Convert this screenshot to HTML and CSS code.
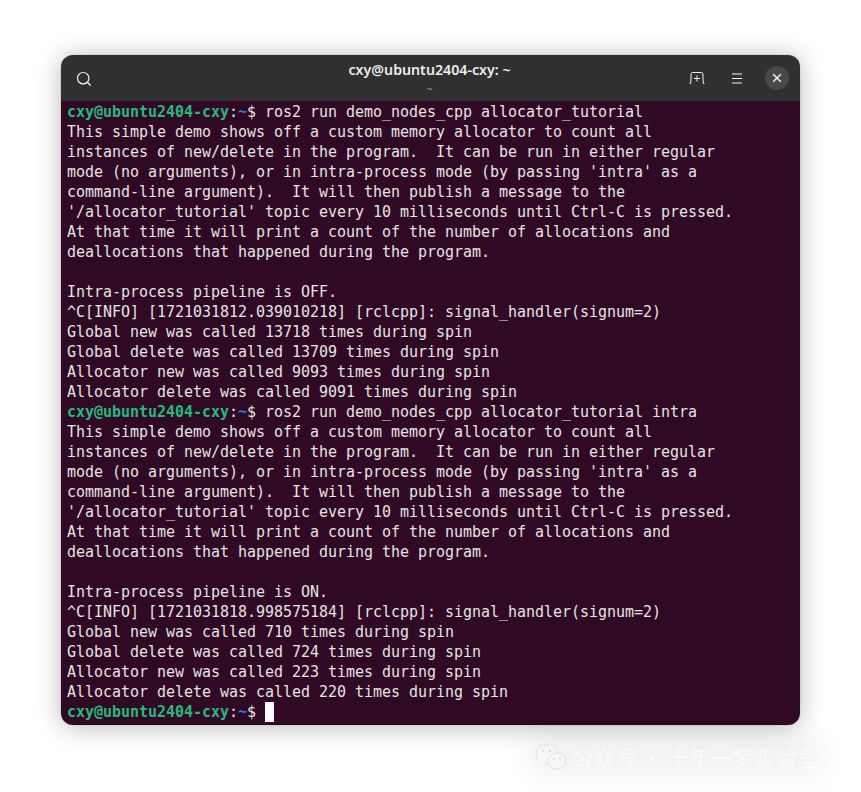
FILE: index.html
```html
<!DOCTYPE html>
<html lang="en">
<head>
<meta charset="utf-8">
<title>cxy@ubuntu2404-cxy: ~</title>
<link rel="stylesheet" href="styles.css">
</head>
<body>
<main class="window">
  <header class="titlebar">
    <button class="icon-btn search" aria-label="Search">
      <svg width="16" height="16" viewBox="0 0 16 16" fill="none" stroke="#f2f2f2" stroke-width="1.2"><circle cx="7.2" cy="7.2" r="5.7"/><path d="M11.3 11.3 14.6 14.6" stroke-width="1.4"/></svg>
    </button>
    <div class="title">
      <div class="title-main">cxy@ubuntu2404-cxy: ~</div>
      <div class="title-sub">~</div>
    </div>
    <div class="actions">
      <button class="icon-btn" aria-label="New tab">
        <svg width="16" height="12" viewBox="0 0 16 12" fill="none" stroke="#f2f2f2" stroke-width="1"><path d="M.5 11.5H1.7L2.2 1.8Q2.3 .5 3.5 .5H12.5Q13.7 .5 13.8 1.8L14.3 11.5H15.5"/><path d="M8 3.5V9.5M5 6.5H11"/></svg>
      </button>
      <button class="icon-btn menu" aria-label="Menu">
        <svg width="12" height="11" viewBox="0 0 12 11" fill="none" stroke="#f2f2f2" stroke-width="1"><path d="M1 1H11M1 5.5H11M1 10H11"/></svg>
      </button>
      <button class="close-btn" aria-label="Close">
        <svg width="10" height="10" viewBox="0 0 10 10" fill="none" stroke="#f5f5f5" stroke-width="1.5"><path d="M1.2 1.2 8.8 8.8M8.8 1.2 1.2 8.8"/></svg>
      </button>
    </div>
  </header>
  <pre class="terminal"><span class="user">cxy@ubuntu2404-cxy</span>:<span class="path">~</span>$ ros2 run demo_nodes_cpp allocator_tutorial
This simple demo shows off a custom memory allocator to count all
instances of new/delete in the program.  It can be run in either regular
mode (no arguments), or in intra-process mode (by passing 'intra' as a
command-line argument).  It will then publish a message to the
'/allocator_tutorial' topic every 10 milliseconds until Ctrl-C is pressed.
At that time it will print a count of the number of allocations and
deallocations that happened during the program.

Intra-process pipeline is OFF.
^C[INFO] [1721031812.039010218] [rclcpp]: signal_handler(signum=2)
Global new was called 13718 times during spin
Global delete was called 13709 times during spin
Allocator new was called 9093 times during spin
Allocator delete was called 9091 times during spin
<span class="user">cxy@ubuntu2404-cxy</span>:<span class="path">~</span>$ ros2 run demo_nodes_cpp allocator_tutorial intra
This simple demo shows off a custom memory allocator to count all
instances of new/delete in the program.  It can be run in either regular
mode (no arguments), or in intra-process mode (by passing 'intra' as a
command-line argument).  It will then publish a message to the
'/allocator_tutorial' topic every 10 milliseconds until Ctrl-C is pressed.
At that time it will print a count of the number of allocations and
deallocations that happened during the program.

Intra-process pipeline is ON.
^C[INFO] [1721031818.998575184] [rclcpp]: signal_handler(signum=2)
Global new was called 710 times during spin
Global delete was called 724 times during spin
Allocator new was called 223 times during spin
Allocator delete was called 220 times during spin
<span class="user">cxy@ubuntu2404-cxy</span>:<span class="path">~</span>$ <span class="cursor"> </span></pre>
</main>
<div class="watermark">
  <svg class="wechat" width="32" height="26" viewBox="0 0 32 26"><ellipse cx="12" cy="10" rx="11" ry="9.5" fill="#f7f7f7" stroke="#e4e4e4"/><path d="M5 16 4 21 10 18Z" fill="#f7f7f7"/><ellipse cx="22" cy="17" rx="9" ry="8" fill="#f7f7f7" stroke="#e0e0e0"/><circle cx="8" cy="7" r="1.2" fill="#ddd"/><circle cx="15" cy="7" r="1.2" fill="#ddd"/><circle cx="19" cy="15" r="1" fill="#ddd"/><circle cx="25" cy="15" r="1" fill="#ddd"/></svg>
  <span class="mark-text">公众号 · 十年一梦实验室</span>
</div>
</body>
</html>
```
FILE: styles.css
```css
* { box-sizing: border-box; }
html { background: #fff; }
html, body { margin: 0; height: 792px; overflow: hidden; }
body { padding: 55px 61px 0; position: relative; }

.window {
  position: relative;
  z-index: 1;
  width: 739px;
  height: 670px;
  display: flex;
  flex-direction: column;
  border-radius: 12px;
  overflow: hidden;
  box-shadow: 0 0 1px rgba(0,0,0,.5), 0 2px 26px rgba(0,0,0,.28);
}
.titlebar {
  height: 46px;
  flex: none;
  display: flex;
  align-items: center;
  position: relative;
  background: #303030;
  padding: 0 11px 0 15px;
  justify-content: space-between;
}
.icon-btn { background: none; border: 0; padding: 0; display: flex; align-items: center; justify-content: center; }
.search { margin-top: 1px; }
.title {
  position: absolute;
  left: 0; right: 2px; top: 6px;
  text-align: center;
  color: #ececec;
  font-family: "Noto Sans", "Open Sans", sans-serif;
}
.title-main { font-size: 14.2px; font-weight: 600; line-height: 18px; }
.title-sub { font-size: 10px; line-height: 12px; margin-top: 4px; color: #999; }
.actions { display: flex; align-items: center; gap: 26px; position: relative; }
.menu { margin-right: -4px; }
.close-btn {
  width: 24px; height: 24px; border: 0; padding: 0;
  border-radius: 50%;
  background: #494949;
  display: flex; align-items: center; justify-content: center;
}
.terminal {
  flex: 1;
  margin: 0;
  padding: 1px 0 0 6px;
  background: #300a24;
  color: #e4e4e2;
  font-family: "DejaVu Sans Mono", monospace;
  font-size: 15px;
  letter-spacing: -0.03px;
  line-height: 20px;
  white-space: pre;
}
.user { color: #26b97c; font-weight: 700; }
.path { color: #2a7bde; font-weight: 700; }
.cursor { background: #fff; display: inline-block; width: 9px; height: 20px; vertical-align: top; }
.watermark {
  position: absolute;
  isolation: isolate;
  left: 535px; top: 744px;
  display: flex;
  align-items: center;
  gap: 5px;
  color: rgba(255,255,255,.6);
  font-family: "Noto Sans CJK SC", sans-serif;
  font-size: 21.5px;
  line-height: 26px;
  white-space: nowrap;
}
.wechat { flex: none; }
.mark-text { font-size: 21.5px; }
.watermark::before {
  content: "";
  position: absolute;
  z-index: -1;
  inset: -6px -5px -6px -5px;
  background: rgba(0,0,0,.05);
  filter: blur(12px);
}
```
